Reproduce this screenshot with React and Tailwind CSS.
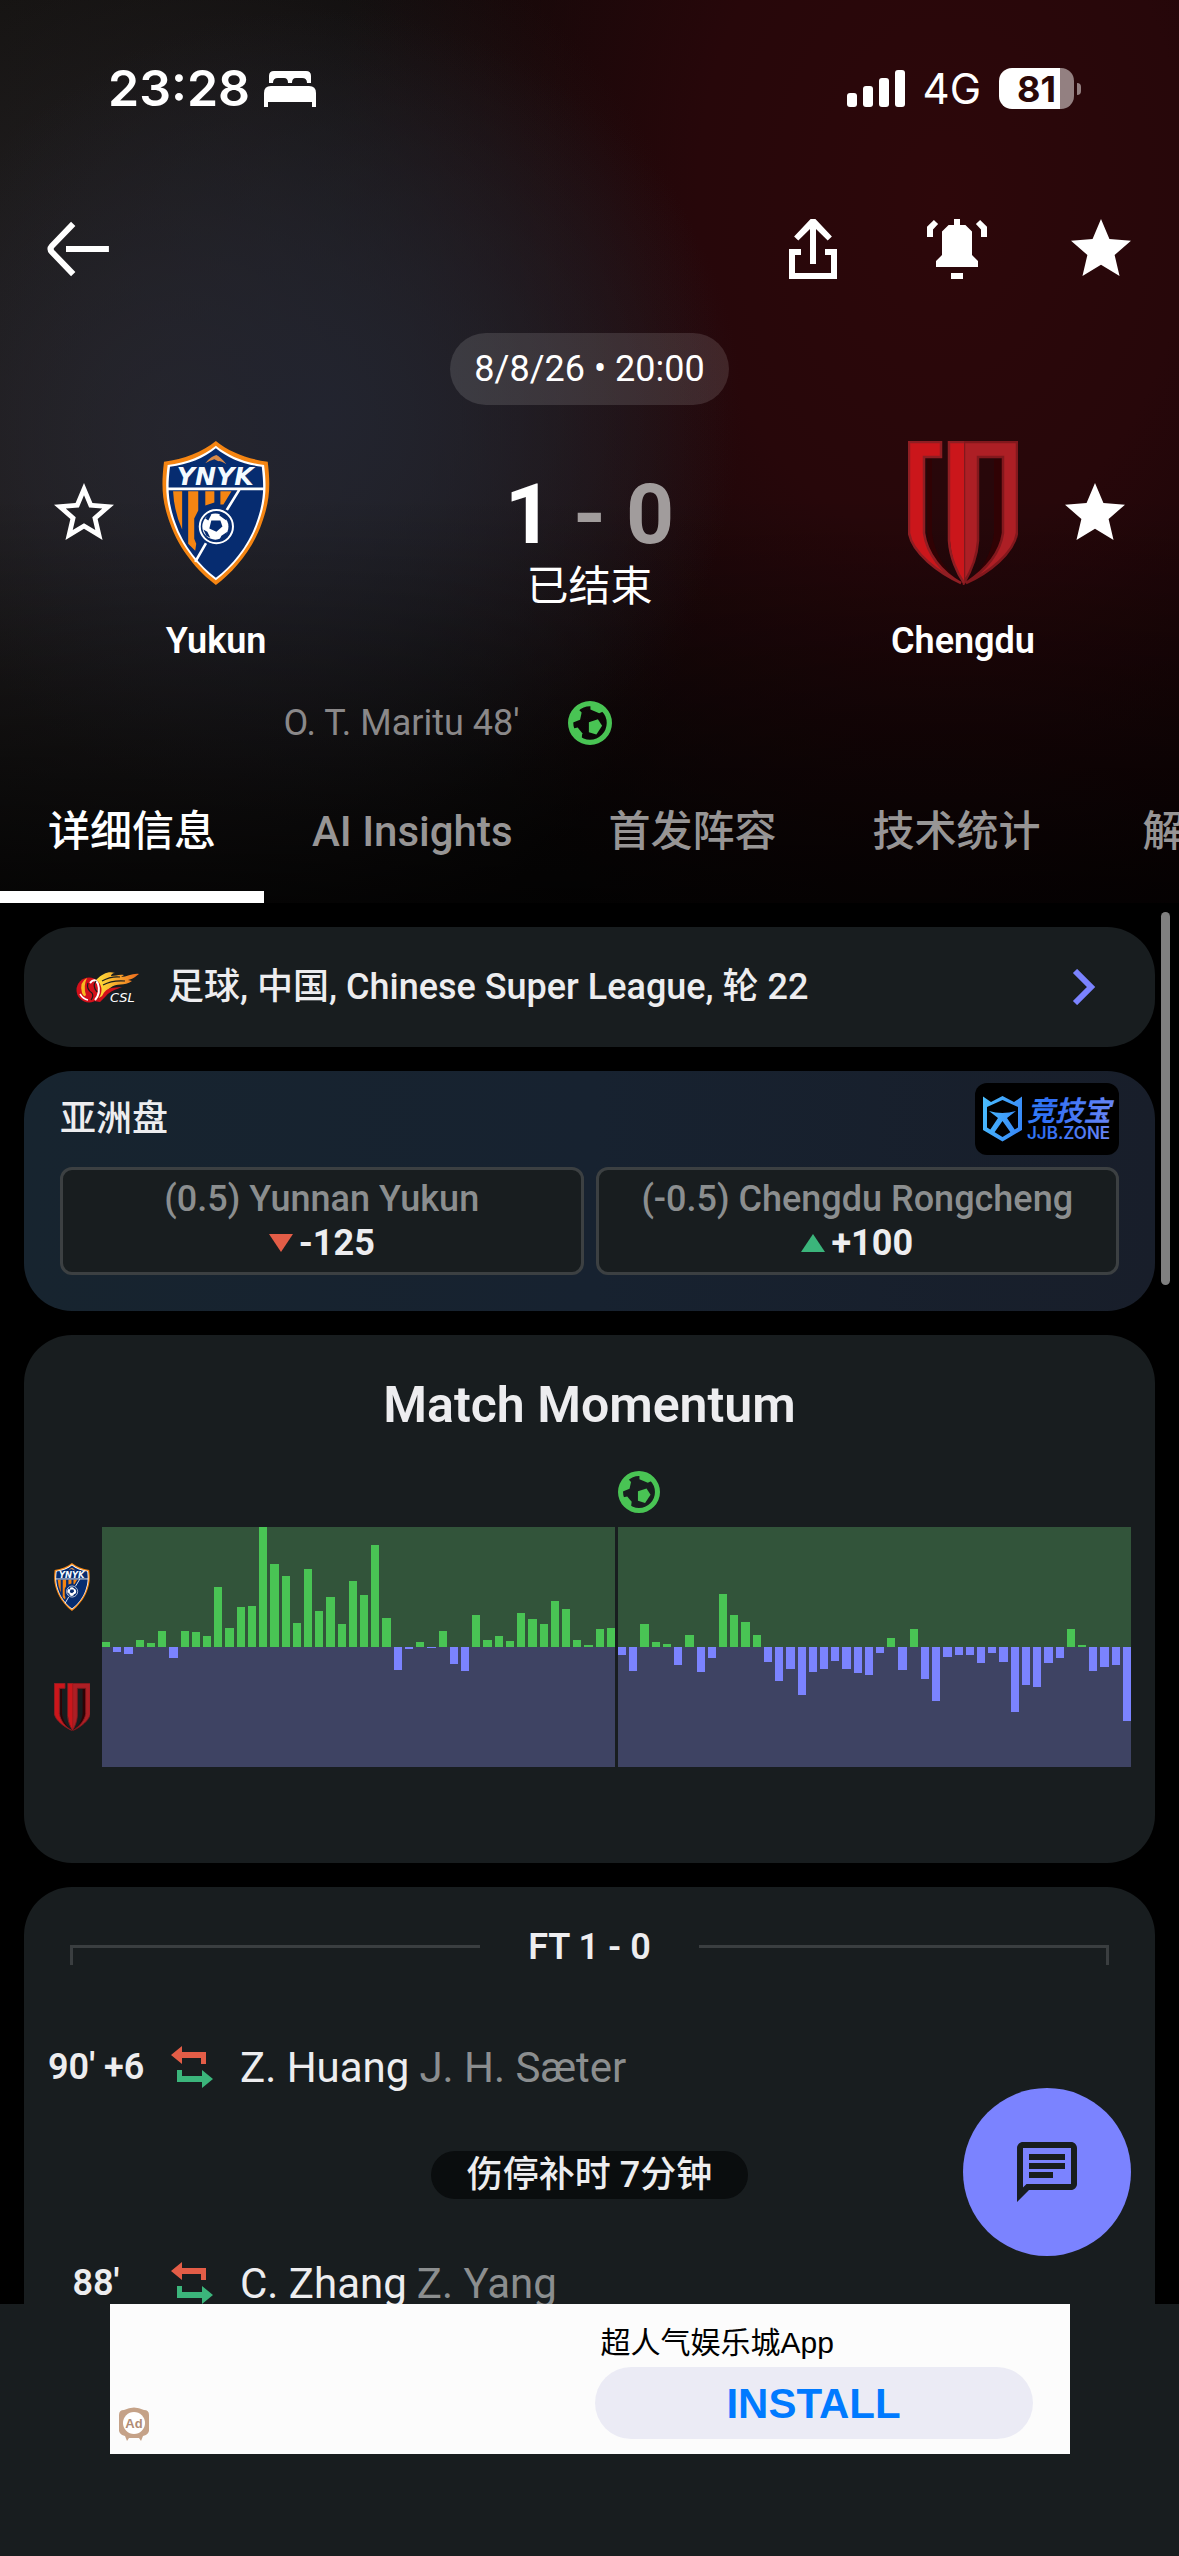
import React, { useState } from 'react';
import { MdOutlineChat } from 'react-icons/md';

const firstHalf = [
  4.4, -4, -6, 6, 3.5, 13.5, -9, 13.5, 12.5, 9.5, 50, 16, 33, 34, 100, 69, 59, 20, 65, 30, 41.5, 19, 55,
  43.5, 85, 24, -19, -2, 4.4, -1, 13.5, -14, -20, 27, 6, 9.5, 5, 28, 23, 19, 38, 32, 6, 1.5, 15, 16,
];

const secondHalf = [
  -7, -20, 19, 4.4, 2.5, -15, 10, -21, -9, 44, 27, 21, 10, -12.5, -28, -18, -40, -21, -18, -11.5, -18, -22,
  -23, -5, 7.5, -19, 15, -27, -45, -8, -7, -7, -13, -5, -12.5, -54, -32, -33, -13, -9, 15, 1.5, -20, -17,
  -15, -62,
];

const tabs = ['详细信息', 'AI Insights', '首发阵容', '技术统计', '解说'];

const STAR = 'M12 17.27 18.18 21l-1.64-7.03L22 9.24l-7.19-.61L12 2 9.19 8.63 2 9.24l5.46 4.73L5.82 21z';
const STAR_HOLE = 'M12 15.4l-3.76 2.27 1-4.28-3.32-2.88 4.38-.38L12 6.1l1.71 4.04 4.38.38-3.32 2.88 1 4.28z';

const StarIcon = ({ outline }) => (
  <svg viewBox="0 0 24 24" className="size-18" fill="currentColor" fillRule="evenodd">
    <path d={outline ? STAR + STAR_HOLE : STAR} />
  </svg>
);

const BallIcon = ({ className }) => (
  <svg viewBox="0 0 20 20" className={className} fill="#49c454">
    <path fillRule="evenodd" d="M10 0a10 10 0 1 1 0 20 10 10 0 0 1 0-20zm0 2.4a7.6 7.6 0 1 0 0 15.2 7.6 7.6 0 0 0 0-15.2z" />
    <path d="M9.5 9.7l4.1-1.4 1.9 3-2.6 3.9-3.4-1z" />
    <path d="M10.2 1.8v2.1l4 1.7 2-.9L14 2z" />
    <path d="M4.6 3.6l1.6 1.6-.7 3.3-3.5 1.4L1.8 7z" />
    <path d="M2 12.6l2.4-.5 2.1 2.6-.3 2.4-2-1.1z" />
  </svg>
);

const BackIcon = () => (
  <svg viewBox="0 0 24 24" className="size-18" fill="none" stroke="currentColor" strokeWidth="2">
    <path d="M10.4 3.6 3.3 11q-.9 1 0 2l7.1 7.4M8 12h14.3" />
  </svg>
);

const ShareIcon = () => (
  <svg viewBox="0 0 24 24" className="size-18" fill="currentColor">
    <path d="M4 12h4v2H6v6h12v-6h-2v-2h4v10H4z" />
    <path d="M11.2 2h1.6l5.5 5.8L16.9 9.2 13 5.3V17h-2V5.3L7.1 9.2 5.7 7.8z" />
  </svg>
);

const BellIcon = () => (
  <svg viewBox="0 0 24 24" className="size-18" fill="currentColor">
    <path d="M11 2h2v2h1.8L17 6.2V14l2 2v2H5v-2l2-2V6.2L9.2 4H11zM10 20h4v2h-4z" />
    <path d="M2 8V4.6l2.3-2.3 1.4 1.4L4 5.5V8zM22 8V4.6l-2.3-2.3-1.4 1.4L20 5.5V8z" />
  </svg>
);

const SwapIcon = () => (
  <svg viewBox="0 0 42 42" className="size-[42px] shrink-0">
    <path fill="#e35d47" d="M0 9 11 0v6h24v12h-5v-6H11v6z" />
    <path fill="#3bb57b" d="M42 33 31 42v-6H6V24h5v6h20v-6z" />
  </svg>
);

const YukunCrest = ({ className }) => {
  const shield =
    'M53.5 0C40 11 22 18 2 20.5-1 45 0 60 8 82c9 26 28 48 45.500 61C71 130 90 108 99 82c8-22 9-37 6-61.500C85 18 67 11 53.500 0z';
  return (
    <svg viewBox="0 0 107 143" className={className}>
      <path d={shield} fill="#f58512" />
      <path d={shield} fill="#fff" transform="translate(53.5 71) scale(.93 .935) translate(-53.5 -71)" />
      <path d={shield} fill="#062c70" transform="translate(53.5 71) scale(.885 .9) translate(-53.5 -71)" />
      <path d="M43 22q6-7 11-8 4 2 10 9-7-4-8-3l-4-2q-4 1-9 4z" fill="#d88a4a" />
      <text x="53" y="44" textAnchor="middle" fontSize="25" fontWeight="700" fontStyle="italic" fontFamily="DejaVu Sans, sans-serif" fill="#f4faff">
        YNYK
      </text>
      <path d="M11 50h9v38q-8-18-9-38zM26 50h10v19l-4 8v20l2 5-1 7-7-7zM43 50h9v11l-9 3zM58 50h11l-8 13h-3z" fill="#f58512" />
      <path d="M5 47.500h97M77 48 61 74M44 101 33 120" stroke="#fff" strokeWidth="2.600" fill="none" />
      <circle cx="54" cy="85" r="19.500" fill="#062c70" />
      <circle cx="54" cy="85" r="16.500" fill="none" stroke="#fff" strokeWidth="2" />
      <circle cx="53" cy="85" r="13" fill="#fff" />
      <path d="M49 79h9l2 6-6 5-7-3z" fill="#062c70" />
      <path d="M43 77l4-5 2 1-3 6zM58 71l6 5v3l-7-5zM41 88l4 2 3 6-4-2zM59 94l6-4-2 5-6 3z" fill="#062c70" />
    </svg>
  );
};

const ChengduCrest = ({ className }) => (
  <svg viewBox="0 0 110 144" className={className}>
    <path d="M19 18h5v74c2 20 14 38 29 51-18-10-34-32-34-51z" fill="#300204" />
    <path d="M86 18h9v74c-4 22-18 40-37 51 16-13 26-31 28-51z" fill="#300204" />
    <path d="M1 1h32v15H16v76c3 21 18 40 37 50C31 132 4 112 1 92z" fill="#cb161b" stroke="#8f1e23" strokeWidth="2.500" />
    <path d="M56 1h53v91c-3 20-28 40-51 50 18-12 34-29 37-50V16H70v84c-1 16-8 32-14 42z" fill="#ad1f25" stroke="#82181d" strokeWidth="2.500" />
    <path d="M56 1H42v99c1 16 7 32 14 42z" fill="#cb161b" />
    <path d="M56 1H41v99c1 16 8 32 15 42" fill="none" stroke="#8f1e23" strokeWidth="2.500" />
  </svg>
);

const CslLogo = () => (
  <svg viewBox="0 0 64 30" className="h-[30px] w-16 overflow-visible">
    <defs>
      <linearGradient id="flame">
        <stop offset="0" stopColor="#ffe23a" />
        <stop offset="1" stopColor="#ee6a1d" />
      </linearGradient>
    </defs>
    <path d="M20 8C27 1 33-1 39 1c-3 0-4 2-4 3 5 0 8-2 13-1l-3 2c6 0 12-4 18-3-4 3-6 5-11 6l4 1c-8 6-15 1-22 7-4 3-6 8-11 12z" fill="url(#flame)" />
    <path d="M26 24c5-10 11-8 20-9-7 3-12 4-16 9l-6 6-6-1z" fill="#d3101b" />
    <path d="M26 9q9-5 18-4M27 13q9-5 22-4" stroke="#181d1f" strokeWidth="1.200" fill="none" />
    <circle cx="13" cy="18" r="12.500" fill="#d3101b" />
    <path d="M11 6Q3 10 6 21q2 5 4 2-3-9 1-17z" fill="#f7b820" />
    <path d="M14 11q5-6 8 1 3 9-3 16" stroke="#fff" strokeWidth="2" fill="none" />
    <path d="M12 11q-2 6 4 10 2 3-1 7M20 9q-4 5 1 11" stroke="#181d1f" strokeWidth="1.200" fill="none" />
    <path d="M4 22q3 5 8 6" stroke="#fff" strokeWidth="1.500" fill="none" />
    <text x="34" y="29.500" fontSize="13" fontStyle="italic" fontFamily="DejaVu Sans, sans-serif" fill="#fff">
      CSL
    </text>
  </svg>
);

const JjbLogo = () => (
  <svg viewBox="0 0 144 72" className="h-18 w-36 rounded-xl bg-black" fill="url(#jjb)">
    <defs>
      <linearGradient id="jjb" gradientUnits="userSpaceOnUse" x1="6" y1="10" x2="138" y2="40">
        <stop offset="0" stopColor="#4cc3ff" />
        <stop offset=".5" stopColor="#2e6ef5" />
        <stop offset="1" stopColor="#6a86f5" />
      </linearGradient>
    </defs>
    <path fillRule="evenodd" d="M8 13.500l8 5.500 11.500-6L39 19l8-5.500V47L27.500 58.500 8 47zM12 24v20.500L27.500 54 43 44.500V24l-15.500-7z" />
    <path d="M14 28q13 4 27 0l-9 7 8 12-4 3-8.500-12L19 50l-4-3 8-12z" />
    <text x="52" y="38" fontSize="28" fontWeight="700" fontStyle="italic" fontFamily="Noto Sans CJK SC, sans-serif">
      竞技宝
    </text>
    <text x="52" y="56" fontSize="17" fontWeight="600" fontFamily="Inter, sans-serif">
      JJB.ZONE
    </text>
  </svg>
);

const StatusBar = () => (
  <div className="flex h-[177px] items-center justify-between pr-[98px] pl-[108px] font-['Inter',sans-serif]">
    <div className="flex items-center gap-[14px]">
      <span className="text-[50px] font-semibold">23:28</span>
      <svg viewBox="0 0 52 36" className="h-9 w-[52px]" fill="currentColor">
        <path d="M5 12V5q0-5 5-5h32q5 0 5 5v7h-4q0-5-5-5h-6q-4 0-4 5h-4q0-5-4-5h-6q-5 0-5 5zM0 22q0-7 7-7h38q7 0 7 7v14h-4v-5H4v5H0z" />
      </svg>
    </div>
    <div className="flex items-center">
      <svg viewBox="0 0 58 37" className="h-[37px] w-[58px]" fill="currentColor">
        <rect y="23" width="10" height="14" rx="3" />
        <rect x="16" y="16" width="10" height="21" rx="3" />
        <rect x="32" y="8" width="10" height="29" rx="3" />
        <rect x="48" width="10" height="37" rx="3" />
      </svg>
      <span className="ml-[18px] text-[42px] leading-none">4G</span>
      <span className="ml-[18px] flex h-[41px] w-[75px] items-center justify-center rounded-[13px] bg-linear-to-r from-white from-81% to-[#938081] to-81% text-4xl font-bold text-[#2a0808]">
        81
      </span>
      <span className="ml-[3px] h-3 w-1 rounded-r-full bg-[#938081]" />
    </div>
  </div>
);

const Team = ({ name, crest, followed, reverse }) => (
  <div className={`flex items-start gap-6 ${reverse ? 'flex-row-reverse' : ''}`}>
    <button type="button" aria-label={`Follow ${name}`} className="mt-9">
      <StarIcon outline={!followed} />
    </button>
    <div className="flex w-36 flex-col items-center">
      {crest}
      <span className="mt-8 text-4xl leading-12 font-semibold">{name}</span>
    </div>
  </div>
);

const Odds = ({ label, value, up }) => (
  <button
    type="button"
    className="flex h-27 flex-1 flex-col items-center justify-center rounded-xl border-3 border-[#3c4042] bg-[#181d1f] text-4xl leading-11"
  >
    <span className="font-medium text-[#8b8e8f]">{label}</span>
    <span className="flex items-center gap-1.5 font-bold">
      <svg viewBox="0 0 24 18" className="h-[18px] w-6" fill={up ? '#3bb57b' : '#e35d47'}>
        <path d={up ? 'M0 18 12 0l12 18z' : 'M0 0h24L12 18z'} />
      </svg>
      {value}
    </span>
  </button>
);

const Half = ({ bars }) => (
  <div className="flex h-60 flex-1 gap-[3px] bg-linear-to-b from-[#32543a] from-50% to-[#3e4363] to-50%">
    {bars.map((v, i) => (
      <div key={i} className={`flex h-1/2 flex-1 flex-col ${v > 0 ? 'justify-end' : 'translate-y-full'}`}>
        <div className={v > 0 ? 'bg-[#49c454]' : 'bg-[#7b83ff]'} style={{ height: `${Math.abs(v)}%` }} />
      </div>
    ))}
  </div>
);

const Substitution = ({ time, playerIn, playerOut }) => (
  <li className="flex h-27 items-center gap-[27px] pl-6">
    <span className="w-24 text-center text-4xl font-semibold whitespace-nowrap">{time}</span>
    <SwapIcon />
    <span className="flex gap-2.5 text-[42px]">
      {playerIn} <span className="text-[#8b8e8f]">{playerOut}</span>
    </span>
  </li>
);

const App = () => {
  const [activeTab, setActiveTab] = useState(tabs[0]);

  return (
    <div className="flex h-screen flex-col bg-black font-['Roboto','Noto_Sans_CJK_SC',sans-serif] text-[#ededef]">
      <header className="bg-[linear-gradient(to_bottom,transparent_55%,rgba(0,0,0,0.75)_100%),radial-gradient(ellipse_36%_45%_at_27%_46%,#22242f_0%,transparent_100%),radial-gradient(ellipse_46%_62%_at_16%_48%,#2a272b_0%,transparent_100%),radial-gradient(ellipse_52%_95%_at_80%_22%,#2d070a_0%,#27070a_40%,transparent_100%),linear-gradient(to_right,#13110f,#0c0909_50%,#0e0405)] text-white">
        <StatusBar />
        <div className="mt-9 flex items-center justify-between px-[42px]">
          <button type="button" aria-label="Back">
            <BackIcon />
          </button>
          <div className="flex gap-18">
            <button type="button" aria-label="Share">
              <ShareIcon />
            </button>
            <button type="button" aria-label="Notifications">
              <BellIcon />
            </button>
            <button type="button" aria-label="Favourite">
              <StarIcon />
            </button>
          </div>
        </div>

        <div className="mt-12 flex justify-center">
          <span className="flex h-18 items-center rounded-full bg-white/12 px-6 text-4xl">8/8/26 • 20:00</span>
        </div>

        <div className="mt-9 flex justify-between px-12">
          <Team name="Yukun" crest={<YukunCrest className="h-36" />} />
          <div className="flex flex-col items-center pt-8">
            <div className="flex gap-5 text-[84px] leading-[84px] font-bold text-[#a19c9c]">
              <span className="text-white">1</span>
              <span>-</span>
              <span>0</span>
            </div>
            <span className="text-[42px] leading-15">已结束</span>
          </div>
          <Team name="Chengdu" crest={<ChengduCrest className="h-36" />} followed reverse />
        </div>

        <div className="mt-[34px] grid h-12 grid-cols-[1fr_auto_1fr] items-center gap-12 text-4xl text-[#8a8889]">
          <span className="text-right">O. T. Maritu 48'</span>
          <BallIcon className="size-11" />
        </div>

        <nav className="mt-3 flex overflow-hidden">
          {tabs.map((tab) => (
            <button
              key={tab}
              type="button"
              onClick={() => setActiveTab(tab)}
              className={`h-36 min-w-48 shrink-0 border-y-12 border-t-transparent px-12 text-[42px] font-medium ${
                tab === activeTab ? 'border-b-white text-white' : 'border-b-transparent text-[#979595]'
              }`}
            >
              {tab}
            </button>
          ))}
        </nav>
      </header>

      <div className="relative min-h-0 flex-1">
        <main className="flex h-full flex-col gap-6 overflow-y-auto px-6 pt-6 [scrollbar-width:none]">
          <a href="#league" className="flex h-30 shrink-0 items-center rounded-[48px] bg-[#181d1f] pr-14 pl-[52px] text-4xl font-medium">
            <CslLogo />
            <span className="ml-7 flex-1">足球, 中国, Chinese Super League, 轮 22</span>
            <svg viewBox="0 0 30 36" className="h-9 w-[30px]" fill="none" stroke="#7b83ff" strokeWidth="6">
              <path d="M6 2l16 16L6 34" />
            </svg>
          </a>

          <section className="shrink-0 rounded-[48px] bg-linear-to-r from-[#17242f] via-[#172230] to-[#181e2a] px-9 pt-3 pb-9">
            <div className="flex items-center justify-between">
              <h2 className="text-4xl font-medium">亚洲盘</h2>
              <JjbLogo />
            </div>
            <div className="mt-3 flex gap-3">
              <Odds label="(0.5) Yunnan Yukun" value="-125" />
              <Odds label="(-0.5) Chengdu Rongcheng" value="+100" up />
            </div>
          </section>

          <section className="shrink-0 rounded-[48px] bg-[#181d1f] px-6 pt-10 pb-24">
            <h2 className="text-center text-[50px] leading-15 font-semibold">Match Momentum</h2>
            <div className="mt-9 flex gap-[3px] pl-[54px]">
              <div className="flex-1" />
              <div className="flex-1">
                <BallIcon className="size-[42px]" />
              </div>
            </div>
            <div className="mt-[14px] flex gap-3 pl-1.5">
              <div className="flex w-9 flex-col items-center justify-around">
                <YukunCrest className="h-12" />
                <ChengduCrest className="h-12" />
              </div>
              <div className="flex flex-1 gap-[3px]">
                <Half bars={firstHalf} />
                <Half bars={secondHalf} />
              </div>
            </div>
          </section>

          <section className="shrink-0 rounded-t-[48px] bg-[#181d1f]">
            <div className="flex h-[126px] items-start gap-12 px-[46px] pt-10">
              <div className="mt-[18px] h-5 flex-1 border-t-3 border-l-3 border-[#3a3e40]" />
              <span className="text-4xl leading-10 font-semibold">FT 1 - 0</span>
              <div className="mt-[18px] h-5 flex-1 border-t-3 border-r-3 border-[#3a3e40]" />
            </div>
            <ul>
              <Substitution time="90' +6" playerIn="Z. Huang" playerOut="J. H. Sæter" />
              <li className="flex h-27 items-center justify-center">
                <span className="flex h-12 items-center rounded-full bg-[#0a0d0e] px-9 text-4xl font-medium">伤停补时 7分钟</span>
              </li>
              <Substitution time="88'" playerIn="C. Zhang" playerOut="Z. Yang" />
            </ul>
          </section>
        </main>

        <div className="absolute top-[9px] right-[9px] h-[373px] w-[9px] rounded-full bg-[#808080]" />
        <button
          type="button"
          aria-label="Chat"
          className="absolute right-12 bottom-12 flex size-42 items-center justify-center rounded-full bg-[#7b83ff] text-[#181d1f]"
        >
          <MdOutlineChat className="size-18" />
        </button>
      </div>

      <footer className="flex justify-center bg-[#181d1f] pb-[102px] font-['Liberation_Sans','Noto_Sans_CJK_SC',sans-serif]">
        <div className="flex h-[150px] w-[960px] items-end justify-between bg-[#fcfcfc] pr-[37px] pl-[9px]">
          <svg viewBox="0 0 30 36" className="mb-3 h-9 w-[30px]">
            <path d="M0 9Q0 4 5 4 15-1 25 4q5 0 5 5v16q-1 4-6 5l-2 5-2-3H10l-2 3-2-5q-5-1-6-5z" fill="#c5a288" />
            <circle cx="15" cy="17" r="11" fill="#fff" />
            <text x="15" y="21.500" textAnchor="middle" fontSize="13" fontWeight="700" fill="#b08c74">
              Ad
            </text>
          </svg>
          <div className="flex w-[438px] flex-col pb-[15px]">
            <span className="pl-1.5 text-3xl leading-12 text-black">超人气娱乐城App</span>
            <button type="button" className="h-18 rounded-full bg-[#ebebf5] text-[42px] font-bold text-[#007aff]">
              INSTALL
            </button>
          </div>
        </div>
      </footer>
    </div>
  );
};

export default App;
